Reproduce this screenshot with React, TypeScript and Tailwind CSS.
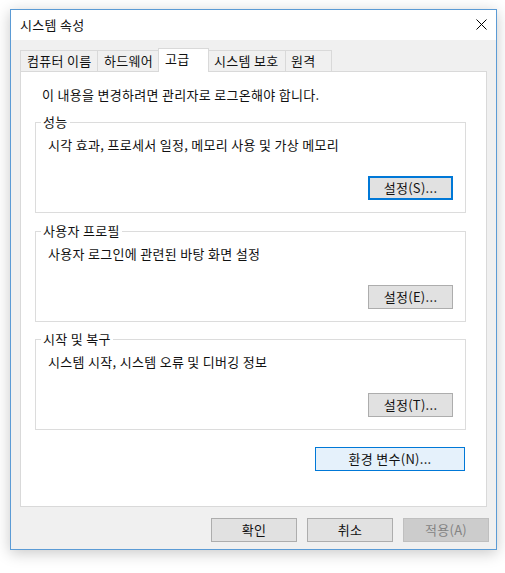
const font = "font-['Noto_Sans_CJK_KR',sans-serif]"

const Group = ({ title, text, button, className }: { title: string; text: string; button: string; className: string }) => (
  <fieldset className={`border border-[#dcdcdc] ${className}`}>
    <legend className="ml-[5px] px-[2px] leading-[16px]">{title}</legend>
    <div className="mt-[7px] pl-[12px] leading-[16px]">{text}</div>
    <div className="mt-[23px] pb-[12px] pr-[12px] flex justify-end">
      {button === '설정(S)...' ? (
        <button className="w-[85px] h-[24px] bg-[#e1e1e1] border-2 border-[#0078d7] leading-[16px]">{button}</button>
      ) : (
        <button className="w-[85px] h-[24px] bg-[#e1e1e1] border border-[#adadad] leading-[16px]">{button}</button>
      )}
    </div>
  </fieldset>
)

export default function App() {
  return (
    <div className={`w-[505px] h-[573px] bg-white overflow-hidden pt-[9px] text-[13px] tracking-[0.3px] text-[#111] ${font}`}>
      <div className="ml-[10px] w-[487px] h-[541px] border border-[#5b9bd5] flex flex-col shadow-[0_3px_14px_rgba(0,0,0,0.22)]">
        {/* title bar */}
        <div className="h-[30px] bg-white flex items-center justify-between pl-[9px] pr-[9px]">
          <span className="leading-[16px]">시스템 속성</span>
          <svg width="11" height="11" viewBox="0 0 11 11" className="-mt-px">
            <path d="M0.5 0.5 L10.5 10.5 M10.5 0.5 L0.5 10.5" stroke="#000" strokeWidth="1" />
          </svg>
        </div>

        <div className="flex-1 bg-[#f0f0f0] pt-[8px] px-[9px]">
          {/* tabs */}
          <div className="flex items-end leading-[16px]">
            <div className="w-[77px] h-[21px] border-l border-t border-[#d9d9d9] flex items-center pl-[6px]">컴퓨터 이름</div>
            <div className="w-[61px] h-[21px] border-l border-t border-[#d9d9d9] flex items-center pl-[6px]">하드웨어</div>
            <div className="relative z-10 w-[51px] h-[24px] -mb-px bg-white border-x border-t border-[#d9d9d9] flex items-center pl-[6px] pb-[3px]">고급</div>
            <div className="w-[76px] h-[21px] border-t border-[#d9d9d9] flex items-center pl-[5px]">시스템 보호</div>
            <div className="w-[47px] h-[21px] border-x border-t border-[#d9d9d9] flex items-center pl-[5px]">원격</div>
          </div>

          {/* panel */}
          <div className="h-[436px] bg-white border border-[#d9d9d9] pt-[15px] pl-[14px] pr-[20px]">
            <div className="pl-[7px] leading-[16px]">이 내용을 변경하려면 관리자로 로그온해야 합니다.</div>
            <Group className="mt-[11px]" title="성능" text="시각 효과, 프로세서 일정, 메모리 사용 및 가상 메모리" button="설정(S)..." />
            <Group className="mt-[10px]" title="사용자 프로필" text="사용자 로그인에 관련된 바탕 화면 설정" button="설정(E)..." />
            <Group className="mt-[9px]" title="시작 및 복구" text="시스템 시작, 시스템 오류 및 디버깅 정보" button="설정(T)..." />
            <div className="mt-[17px] pr-[1px] flex justify-end">
              <button className="w-[150px] h-[24px] bg-[#e5f1fb] border border-[#0078d7] leading-[16px]">환경 변수(N)...</button>
            </div>
          </div>

          {/* dialog buttons */}
          <div className="mt-[11px] -mr-[2px] flex justify-end gap-[10px] leading-[16px]">
            <button className="w-[86px] h-[24px] bg-[#e1e1e1] border border-[#adadad]">확인</button>
            <button className="w-[86px] h-[24px] bg-[#e1e1e1] border border-[#adadad]">취소</button>
            <button className="w-[86px] h-[24px] bg-[#cccccc] border border-[#bfbfbf] text-[#838383]">적용(A)</button>
          </div>
        </div>
      </div>
    </div>
  )
}
